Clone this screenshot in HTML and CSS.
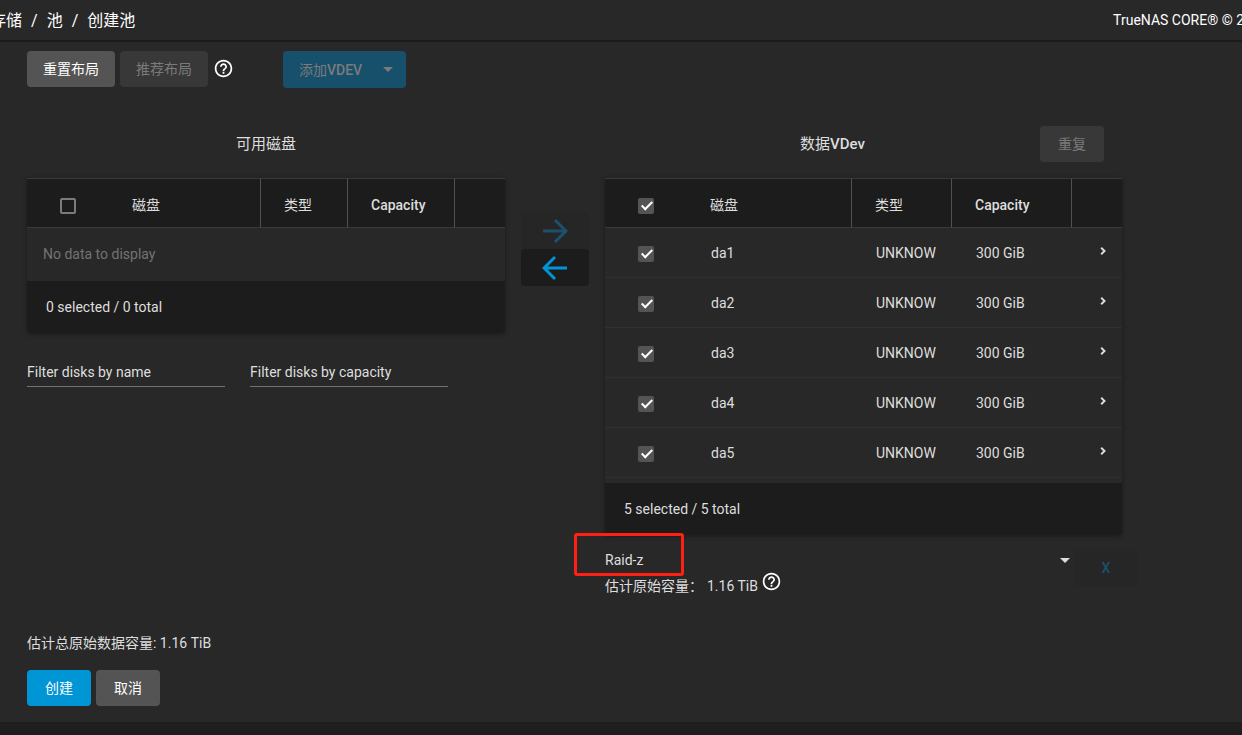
FILE: index.html
```html
<!DOCTYPE html>
<html lang="zh-CN">
<head>
<meta charset="utf-8">
<title>创建池</title>
<link rel="stylesheet" href="styles.css">
</head>
<body>
<svg class="defs" aria-hidden="true">
  <symbol id="help" viewBox="0 0 24 24"><path fill="currentColor" d="M11 18h2v-2h-2v2zm1-16C6.480 2 2 6.480 2 12s4.480 10 10 10 10-4.480 10-10S17.520 2 12 2zm0 18c-4.410 0-8-3.590-8-8s3.590-8 8-8 8 3.590 8 8-3.590 8-8 8zm0-14c-2.210 0-4 1.790-4 4h2c0-1.100.9-2 2-2s2 .9 2 2c0 2-3 1.750-3 5h2c0-2.250 3-2.500 3-5 0-2.210-1.790-4-4-4z"/></symbol>
  <symbol id="caret" viewBox="0 0 10 5"><path fill="currentColor" d="M0 0h10L5 5z"/></symbol>
  <symbol id="chevron" viewBox="0 0 6 8"><path fill="none" stroke="currentColor" stroke-width="1.900" d="M1.200 .8L4.500 4 1.200 7.200"/></symbol>
  <symbol id="arrow" viewBox="0 0 26 26"><path fill="none" stroke="currentColor" stroke-width="3" d="M1 13h22M13 2l11 11-11 11"/></symbol>
</svg>
<header class="topbar">
  <nav class="crumbs"><a href="#">存储</a><span>/</span><a href="#">池</a><span>/</span><a href="#">创建池</a></nav>
  <div class="copyright">TrueNAS CORE® © 2</div>
</header>
<main class="card">
  <div class="toolbar">
    <button class="btn">重置布局</button>
    <button class="btn" disabled>推荐布局</button>
    <svg class="help"><use href="#help"/></svg>
    <button class="btn add" disabled><span>添加<b>VDEV</b></span><svg class="caret"><use href="#caret"/></svg></button>
  </div>
  <div class="manager">
    <section class="available">
      <div class="head"><h2>可用磁盘</h2></div>
      <div class="panel">
        <table>
          <colgroup><col class="c-check"><col><col class="c-type-s"><col class="c-cap-s"><col class="c-more"></colgroup>
          <thead><tr><th class="check"><input type="checkbox" aria-label="全选可用磁盘"></th><th class="name">磁盘</th><th>类型</th><th><b>Capacity</b></th><th></th></tr></thead>
          <tbody><tr><td class="empty" colspan="5">No data to display</td></tr></tbody>
        </table>
        <div class="count">0 selected / 0 total</div>
      </div>
      <div class="filters">
        <input type="text" placeholder="Filter disks by name" aria-label="Filter disks by name">
        <input type="text" placeholder="Filter disks by capacity" aria-label="Filter disks by capacity">
      </div>
    </section>
    <div class="swap">
      <button aria-label="添加到 VDev" disabled><svg><use href="#arrow"/></svg></button>
      <button class="back" aria-label="从 VDev 移除"><svg><use href="#arrow"/></svg></button>
    </div>
    <section class="vdev">
      <div class="head"><h2>数据<b>VDev</b></h2><button class="btn" disabled>重复</button></div>
      <div class="panel">
        <table class="disks">
          <colgroup><col class="c-check"><col><col class="c-type"><col class="c-cap"><col class="c-more"></colgroup>
          <thead><tr><th class="check"><input type="checkbox" checked aria-label="全选"></th><th class="name">磁盘</th><th>类型</th><th><b>Capacity</b></th><th></th></tr></thead>
          <tbody>
            <tr><td class="check"><input type="checkbox" checked aria-label="da1"></td><td class="name">da1</td><td>UNKNOW</td><td>300 GiB</td><td class="more"><svg><use href="#chevron"/></svg></td></tr>
            <tr><td class="check"><input type="checkbox" checked aria-label="da2"></td><td class="name">da2</td><td>UNKNOW</td><td>300 GiB</td><td class="more"><svg><use href="#chevron"/></svg></td></tr>
            <tr><td class="check"><input type="checkbox" checked aria-label="da3"></td><td class="name">da3</td><td>UNKNOW</td><td>300 GiB</td><td class="more"><svg><use href="#chevron"/></svg></td></tr>
            <tr><td class="check"><input type="checkbox" checked aria-label="da4"></td><td class="name">da4</td><td>UNKNOW</td><td>300 GiB</td><td class="more"><svg><use href="#chevron"/></svg></td></tr>
            <tr><td class="check"><input type="checkbox" checked aria-label="da5"></td><td class="name">da5</td><td>UNKNOW</td><td>300 GiB</td><td class="more"><svg><use href="#chevron"/></svg></td></tr>
          </tbody>
        </table>
        <div class="count">5 selected / 5 total</div>
      </div>
      <div class="raid">
        <div class="raid-main">
          <div class="select">
            <select aria-label="布局类型"><option>Raid-z</option></select>
            <svg class="caret"><use href="#caret"/></svg>
            <span class="highlight"></span>
          </div>
          <div class="estimate"><span>估计原始容量：</span><span>1.16 TiB</span><svg class="help"><use href="#help"/></svg></div>
        </div>
        <button class="remove" disabled>X</button>
      </div>
    </section>
  </div>
  <p class="total">估计总原始数据容量: 1.16 TiB</p>
  <div class="actions">
    <button class="btn primary">创建</button>
    <button class="btn">取消</button>
  </div>
</main>
</body>
</html>
```
FILE: styles.css
```css
*, *::after { box-sizing: border-box; }
body {
  margin: 0;
  background: #1e1e1e;
  color: #dedede;
  font: 14px/20px Roboto, "Noto Sans CJK SC", sans-serif;
  overflow: hidden;
}
button, input, select { font: inherit; color: inherit; margin: 0; }
b { font-weight: 500; }
.defs { position: absolute; width: 0; height: 0; }
.topbar {
  display: flex;
  justify-content: space-between;
  align-items: center;
  height: 42px;
  background: #282828;
  border-bottom: 2px solid #1c1c1c;
  color: #fff;
  white-space: nowrap;
}
.crumbs { display: flex; gap: 9px; margin-left: -10px; padding-top: 1px; font-size: 16px; }
.crumbs a { color: inherit; text-decoration: none; }
.copyright { margin-right: -2px; }
.card { padding: 9px 104px 16px 27px; background: #282828; box-shadow: 0 1px 2px #111; }
.toolbar { display: flex; align-items: flex-start; gap: 5px; }
.btn {
  min-width: 64px;
  height: 36px;
  padding: 0 16px;
  border: 0;
  border-radius: 4px;
  background: #545454;
  color: #fff;
}
.btn:disabled { background: #383838; color: #7b7b7b; }
.help { width: 21px; height: 21px; color: #fff; }
.toolbar .help { margin: 7px 44px 0 0; }
.btn.add,
.btn.add:disabled {
  display: flex;
  align-items: center;
  gap: 21px;
  height: 37px;
  padding-right: 13px;
  background: #17506b;
}
.caret { width: 10px; height: 5px; }
.manager { display: grid; grid-template-columns: minmax(0, 478fr) 68px minmax(0, 533fr); gap: 16px; margin-top: 38px; }
.head { display: flex; align-items: center; justify-content: center; height: 36px; margin-bottom: 16px; }
h2 { margin: 0; font-size: 15px; line-height: 20px; font-weight: 400; }
.vdev .head { padding-right: 34px; }
.vdev h2 { flex: 1; padding-left: 20px; text-align: center; }
.panel { border-radius: 0 0 4px 4px; background: #282828; box-shadow: 0 1px 4px #1a1a1a; }
.vdev .panel { margin-right: 16px; }
table { width: 100%; table-layout: fixed; border-collapse: separate; border-spacing: 0; }
.c-check { width: 82px; }
.c-type-s { width: 87px; }
.c-cap-s { width: 107px; }
.c-type { width: 100px; }
.c-cap { width: 120px; }
.c-more { width: 51px; }
th {
  height: 50px;
  padding: 4px 0 0 23px;
  background: #1c1c1c;
  border: solid #3a3a3a;
  border-width: 1px 0;
  border-left: 1px solid #505050;
  text-align: left;
  font-weight: 400;
}
th.check, th.name { border-left: 0; }
td { height: 50px; padding: 0 0 0 25px; border-bottom: 1px solid #303030; }
th.check { padding: 6px 0 0 33px; }
td.check { padding: 2px 0 0 33px; }
td.name { padding-left: 24px; }
td.more { padding: 0 0 4px 29px; }
td.more svg { display: block; width: 6px; height: 8px; }
td.empty { height: 53px; padding: 0 16px 2px; border: 0; color: #737373; }
.count { height: 52px; padding: 16px 19px; border-radius: 0 0 4px 4px; background: #1c1c1c; }
.disks { padding-bottom: 5px; }
input[type="checkbox"] {
  appearance: none;
  display: block;
  position: relative;
  width: 16px;
  height: 16px;
  border: 2px solid #7b7b7b;
  border-radius: 2px;
}
input[type="checkbox"]:checked { border-color: #545454; background: #545454; }
input[type="checkbox"]:checked::after {
  content: "";
  position: absolute;
  left: 4px;
  top: -1px;
  width: 6px;
  height: 11px;
  border: solid #fff;
  border-width: 0 2px 2px 0;
  transform: rotate(45deg);
}
.filters { display: flex; gap: 25px; margin-top: 24px; }
.filters input {
  width: 198px;
  height: 30px;
  padding: 0;
  border: 0;
  border-bottom: 1px solid #737373;
  background: none;
  outline: 0;
}
.filters input::placeholder { color: #dedede; opacity: 1; }
.swap { display: flex; flex-direction: column; padding-top: 86px; }
.swap button {
  display: grid;
  place-items: center;
  height: 37px;
  border: 0;
  border-radius: 4px;
  background: #1c1c1c;
  color: #0095d5;
}
.swap button:disabled { background: #262626; color: #1b516a; }
.swap svg { width: 26px; height: 26px; }
.back svg { transform: scaleX(-1); }
.raid { display: flex; align-items: flex-start; gap: 4px; padding-top: 13px; }
.raid-main { flex: 1; }
.select { position: relative; display: flex; align-items: center; }
select { flex: 1; height: 24px; padding: 0; border: 0; appearance: none; background: none; outline: 0; }
.select .caret { position: absolute; right: 0; top: 10px; pointer-events: none; }
.highlight {
  position: absolute;
  left: -31px;
  top: -15px;
  width: 110px;
  height: 43px;
  border: 3px solid #ff2013;
  border-radius: 3px;
  pointer-events: none;
}
.estimate { display: flex; align-items: flex-start; height: 30px; padding-top: 4px; }
.estimate .help { margin: -5px 0 0 3px; }
.estimate span:first-child { margin-right: 4px; }
.remove {
  width: 64px;
  height: 37px;
  margin-top: 1px;
  border: 0;
  border-radius: 4px;
  background: #262626;
  color: #1b516a;
  font-weight: 500;
}
.total { margin: 31px 0 17px; }
.actions { display: flex; gap: 5px; }
.btn.primary { background: #0095d5; }
```
